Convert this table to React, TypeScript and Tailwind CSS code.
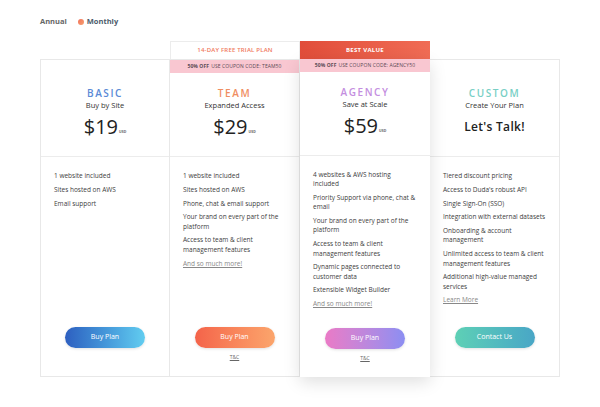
import React from "react";

type Plan = {
  key: string;
  name: string;
  nameColor: string;
  sub: string;
  price?: string;
  tag?: "trial" | "best";
  coupon?: string;
  features: string[];
  more?: string;
  button: string;
  btnClass: string;
  tc?: boolean;
  featured?: boolean;
};

const plans: Plan[] = [
  {
    key: "basic",
    name: "BASIC",
    nameColor: "text-[#5a8ad6]",
    sub: "Buy by Site",
    price: "19",
    features: ["1 website included", "Sites hosted on AWS", "Email support"],
    button: "Buy Plan",
    btnClass: "bg-gradient-to-r from-[#2e5fc0] to-[#62cdf0]",
  },
  {
    key: "team",
    name: "TEAM",
    nameColor: "text-[#f08e62]",
    sub: "Expanded Access",
    price: "29",
    tag: "trial",
    coupon: "TEAM50",
    features: [
      "1 website included",
      "Sites hosted on AWS",
      "Phone, chat & email support",
      "Your brand on every part of the platform",
      "Access to team & client management features",
    ],
    more: "And so much more!",
    button: "Buy Plan",
    btnClass: "bg-gradient-to-r from-[#f4634a] to-[#fba56c]",
    tc: true,
  },
  {
    key: "agency",
    name: "AGENCY",
    nameColor: "text-[#c48ee0]",
    sub: "Save at Scale",
    price: "59",
    tag: "best",
    coupon: "AGENCY50",
    features: [
      "4 websites & AWS hosting included",
      "Priority Support via phone, chat & email",
      "Your brand on every part of the platform",
      "Access to team & client management features",
      "Dynamic pages connected to customer data",
      "Extensible Widget Builder",
    ],
    more: "And so much more!",
    button: "Buy Plan",
    btnClass: "bg-gradient-to-r from-[#ea7ac6] to-[#8b8ef2]",
    tc: true,
    featured: true,
  },
  {
    key: "custom",
    name: "CUSTOM",
    nameColor: "text-[#78cfc5]",
    sub: "Create Your Plan",
    features: [
      "Tiered discount pricing",
      "Access to Duda's robust API",
      "Single Sign-On (SSO)",
      "Integration with external datasets",
      "Onboarding & account management",
      "Unlimited access to team & client management features",
      "Additional high-value managed services",
    ],
    more: "Learn More",
    button: "Contact Us",
    btnClass: "bg-gradient-to-r from-[#5ed0b5] to-[#49a6c6]",
  },
];

function Column({ p, first }: { p: Plan; first: boolean }) {
  return (
    <div className={`flex w-[130px] flex-col ${p.featured ? "relative z-10" : ""}`}>
      <div className="h-[18px]">
        {p.tag === "trial" && (
          <div className="flex h-full items-center justify-center border-x border-t border-[#ececec] bg-white text-[6px] font-semibold tracking-[0.2px] text-[#f07a5e]">
            14-DAY FREE TRIAL PLAN
          </div>
        )}
        {p.tag === "best" && (
          <div className="flex h-full items-center justify-center bg-gradient-to-r from-[#e14d3a] to-[#f06c55] text-[6px] font-bold tracking-[0.3px] text-white">
            BEST VALUE
          </div>
        )}
      </div>
      <div
        className={`flex h-[318px] flex-col bg-white ${
          p.featured
            ? "shadow-[0_5px_16px_rgba(0,0,0,0.13)]"
            : `border-y border-r border-[#e8e8e8] ${first ? "border-l" : ""}`
        }`}
      >
        {p.coupon ? (
          <div className="flex h-[13px] shrink-0 items-center justify-center bg-[#f9c7d1] text-[5px] tracking-[0.1px] text-[#5a4a55]">
            <span className="font-bold">50% OFF</span>
            <span className="ml-[2px]">USE COUPON CODE: {p.coupon}</span>
          </div>
        ) : (
          <div className="h-[13px] shrink-0" />
        )}
        <div className="flex h-[84px] shrink-0 flex-col items-center border-b border-[#ececec] pt-[14px]">
          <div className={`text-[10px] font-semibold leading-[12px] tracking-[1.6px] ${p.nameColor}`}>{p.name}</div>
          <div className="mt-[2px] text-[7.5px] leading-[9px] text-[#333]">{p.sub}</div>
          {p.price ? (
            <div className="mt-[6px] flex items-end text-[#222]">
              <span className="text-[20px] leading-[22px]">${p.price}</span>
              <span className="mb-[4px] ml-[1px] text-[3.5px] font-bold leading-[4px] text-[#666]">USD</span>
            </div>
          ) : (
            <div className="mt-[8px] text-[12px] font-semibold leading-[18px] tracking-[0.3px] text-[#222]">Let's Talk!</div>
          )}
        </div>
        <div className="flex flex-col gap-[4.5px] px-[13px] pt-[14px] text-[6.5px] leading-[9.3px] text-[#3d3d3d]">
          {p.features.map((f) => (
            <div key={f}>{f}</div>
          ))}
          {p.more && <div className="text-[#888] underline">{p.more}</div>}
        </div>
        <div className="mt-auto flex h-[49px] shrink-0 flex-col items-center">
          <div
            className={`flex h-[21px] w-[80px] items-center justify-center rounded-full text-[7px] text-white shadow-[0_1px_3px_rgba(0,0,0,0.12)] ${p.btnClass}`}
          >
            {p.button}
          </div>
          {p.tc && <div className="mt-[6px] text-[5px] text-[#666] underline">T&amp;C</div>}
        </div>
      </div>
    </div>
  );
}

export default function App() {
  return (
    <div
      className="h-[407px] w-[600px] bg-white px-[40px] pt-[16px]"
      style={{ fontFamily: '"Open Sans", "Liberation Sans", sans-serif' }}
    >
      <div className="flex h-[12px] items-center text-[7.5px] font-bold">
        <span className="text-[#666]">Annual</span>
        <span className="ml-[11px] h-[6px] w-[6px] rounded-full bg-gradient-to-br from-[#f2705a] to-[#f5a070]" />
        <span className="ml-[3px] text-[#4d5b6b]">Monthly</span>
      </div>
      <div className="mt-[13px] flex">
        {plans.map((p, i) => (
          <Column key={p.key} p={p} first={i === 0} />
        ))}
      </div>
    </div>
  );
}
